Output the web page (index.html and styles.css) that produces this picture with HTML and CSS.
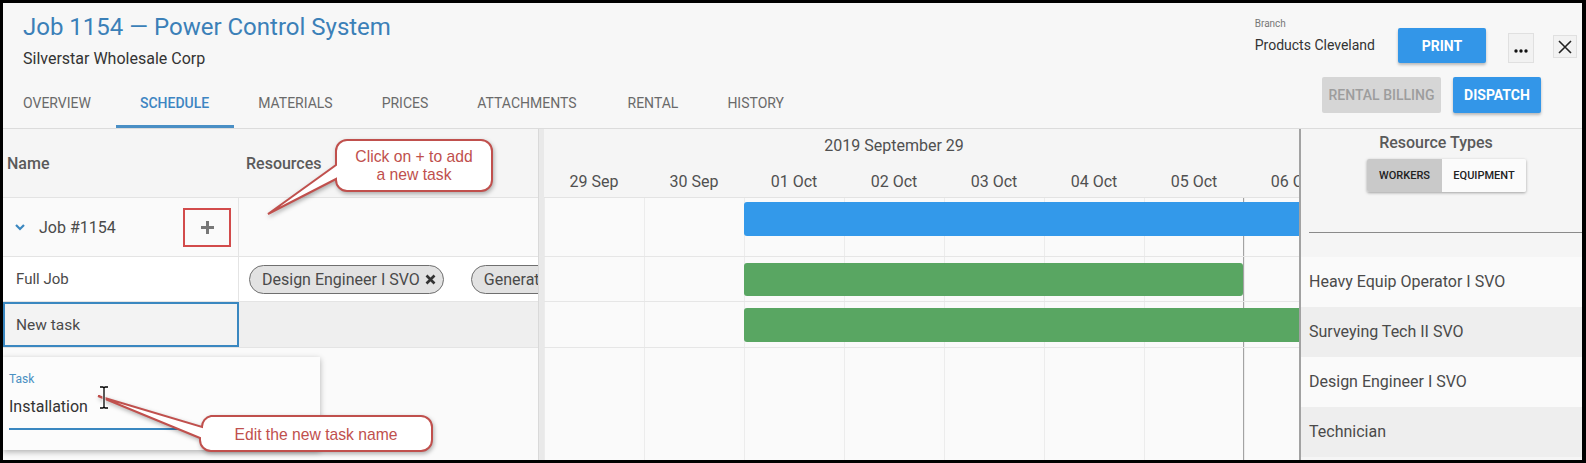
FILE: index.html
```html
<!DOCTYPE html>
<html lang="en">
<head>
<meta charset="utf-8">
<title>Job 1154 — Power Control System</title>
<link rel="stylesheet" href="styles.css">
</head>
<body>
<div class="app">
  <header class="top">
    <div class="top-left">
      <h1 class="title">Job 1154 — Power Control System</h1>
      <div class="subtitle">Silverstar Wholesale Corp</div>
      <nav class="tabs">
        <a class="tab">OVERVIEW</a>
        <a class="tab active">SCHEDULE</a>
        <a class="tab">MATERIALS</a>
        <a class="tab">PRICES</a>
        <a class="tab tab-wide">ATTACHMENTS</a>
        <a class="tab">RENTAL</a>
        <a class="tab">HISTORY</a>
      </nav>
    </div>
    <div class="top-right">
      <div class="row1">
        <div class="branch">
          <div class="branch-label">Branch</div>
          <div class="branch-value">Products Cleveland</div>
        </div>
        <button class="btn btn-primary btn-print">PRINT</button>
        <button class="icon-btn more"><svg width="16" height="6" viewBox="0 0 16 6"><circle cx="3" cy="3" r="1.7" fill="#111"/><circle cx="8" cy="3" r="1.7" fill="#111"/><circle cx="13" cy="3" r="1.7" fill="#111"/></svg></button>
        <button class="icon-btn close"><svg width="14" height="14" viewBox="0 0 14 14"><path d="M1 1L13 13M13 1L1 13" stroke="#222" stroke-width="1.6"/></svg></button>
      </div>
      <div class="row2">
        <button class="btn btn-rental">RENTAL BILLING</button>
        <button class="btn btn-primary btn-dispatch">DISPATCH</button>
      </div>
    </div>
  </header>

  <main class="main">
    <section class="grid">
      <div class="grid-head">
        <div class="c-name">Name</div>
        <div class="c-res">Resources</div>
      </div>
      <div class="g-row row-job">
        <div class="cell-name">
          <svg class="chev" width="10" height="7" viewBox="0 0 10 7"><path d="M1 1L5 5L9 1" stroke="#3a87c0" stroke-width="2.2" fill="none"/></svg>
          <span class="job-label">Job #1154</span>
          <button class="add-btn"><svg width="13" height="13" viewBox="0 0 13 13"><path d="M6.5 0V13M0 6.5H13" stroke="#777" stroke-width="3"/></svg></button>
        </div>
        <div class="cell-res"></div>
      </div>
      <div class="g-row row-full">
        <div class="cell-name">Full Job</div>
        <div class="cell-res">
          <span class="chip">Design Engineer I SVO <svg width="11" height="11" viewBox="0 0 11 11"><path d="M1.5 1.5L9.5 9.5M9.5 1.5L1.5 9.5" stroke="#333" stroke-width="2.6"/></svg></span>
          <span class="chip">Generator Technician <svg width="11" height="11" viewBox="0 0 11 11"><path d="M1.5 1.5L9.5 9.5M9.5 1.5L1.5 9.5" stroke="#333" stroke-width="2.6"/></svg></span>
        </div>
      </div>
      <div class="g-row row-new">
        <div class="cell-name">New task</div>
        <div class="cell-res"></div>
      </div>
      <div class="grid-rest"></div>
    </section>

    <div class="splitter"></div>

    <section class="gantt">
      <div class="gantt-head">
        <div class="month">2019 September 29</div>
        <div class="days">
          <div class="day">29 Sep</div>
          <div class="day">30 Sep</div>
          <div class="day">01 Oct</div>
          <div class="day">02 Oct</div>
          <div class="day">03 Oct</div>
          <div class="day">04 Oct</div>
          <div class="day">05 Oct</div>
          <div class="day">06 Oct</div>
        </div>
      </div>
      <div class="gantt-body">
        <div class="today"></div>
        <div class="gt-row gt-job"><div class="bar bar-blue" style="margin-left:200px;width:700px"></div></div>
        <div class="gt-row gt-full"><div class="bar bar-green" style="margin-left:200px;width:499px"></div></div>
        <div class="gt-row gt-new"><div class="bar bar-green" style="margin-left:200px;width:700px"></div></div>
      </div>
    </section>

    <aside class="res-panel">
      <div class="res-title">Resource Types</div>
      <div class="toggle-wrap">
        <div class="toggle">
          <span class="t-workers">WORKERS</span>
          <span class="t-equip">EQUIPMENT</span>
        </div>
      </div>
      <div class="res-divider"></div>
      <div class="res-list">
        <div class="res-item">Heavy Equip Operator I SVO</div>
        <div class="res-item alt">Surveying Tech II SVO</div>
        <div class="res-item">Design Engineer I SVO</div>
        <div class="res-item alt">Technician</div>
      </div>
    </aside>
  </main>

  <div class="editor">
    <div class="editor-label">Task</div>
    <div class="editor-input">Installation</div>
  </div>

  <svg class="annot" width="1579" height="457" viewBox="0 0 1579 457">
    <path class="bubble" d="M344 137H478A11 11 0 0 1 489 148V177A11 11 0 0 1 478 188H344A11 11 0 0 1 333 177V176L265 211L333 162V148A11 11 0 0 1 344 137Z"/>
    <path class="bubble" d="M208 413H418A11 11 0 0 1 429 424V437A11 11 0 0 1 418 448H208A11 11 0 0 1 197 437V435L95 393L199 424A11 11 0 0 1 208 413Z"/>
    <path d="M97 384h3l1 1l1-1h3M101 385V404M97 405h3l1-1l1 1h3" stroke="#fff" stroke-width="3" fill="none"/>
    <path d="M97 384h3l1 1l1-1h3M101 385V404M97 405h3l1-1l1 1h3" stroke="#000" stroke-width="1.3" fill="none"/>
  </svg>

  <div class="callout-text ct-add">Click on + to add<br>a new task</div>
  <div class="callout-text ct-edit">Edit the new task name</div>
</div>
</body>
</html>
```

FILE: styles.css
```css
* { box-sizing: border-box; }

html, body { margin: 0; padding: 0; }

body {
  background: #000;
  width: 1586px;
  height: 463px;
  overflow: hidden;
  font-family: Roboto, "Liberation Sans", Arial, sans-serif;
}

.app {
  position: relative;
  margin: 3px 4px 3px 3px;
  width: 1579px;
  height: 457px;
  background: #f7f7f7;
  overflow: hidden;
  display: flex;
  flex-direction: column;
}

/* ---------- header ---------- */
.top {
  height: 126px;
  flex: none;
  border-bottom: 1px solid #dcdcdc;
  display: flex;
}

.top-left {
  padding: 10px 0 0 20px;
  display: flex;
  flex-direction: column;
}

.title {
  margin: 0;
  font-size: 24px;
  line-height: 28px;
  font-weight: 400;
  color: #3b80b8;
  white-space: nowrap;
}

.subtitle {
  margin-top: 8px;
  font-size: 16px;
  line-height: 20px;
  color: #333;
}

.tabs {
  margin-top: auto;
  margin-left: -24px;
  display: flex;
  height: 47px;
}

.tab {
  height: 47px;
  padding: 0 25px 0 24px;
  line-height: 44px;
  font-size: 14px;
  color: #6a6a6a;
  white-space: nowrap;
}

.tab-wide { padding-right: 27px; }

.tab.active {
  color: #3d85c2;
  font-weight: 500;
  box-shadow: inset 0 -3px 0 #4a8fc5;
}

.top-right {
  margin-left: auto;
  padding: 15px 5px 0 0;
  display: flex;
  flex-direction: column;
  align-items: flex-end;
}

.row1 {
  display: flex;
  align-items: flex-start;
}

.branch { margin-right: 23px; }

.branch-label {
  font-size: 10px;
  line-height: 12px;
  color: #777;
}

.branch-value {
  margin-top: 5px;
  font-size: 14px;
  line-height: 20px;
  color: #333;
  white-space: nowrap;
}

.btn {
  border: 0;
  border-radius: 2px;
  padding: 0;
  font-family: inherit;
  font-size: 14px;
  cursor: pointer;
}

.btn-primary {
  background: #3396e8;
  color: #fff;
  font-weight: 700;
  box-shadow: 0 2px 3px rgba(0, 0, 0, 0.25);
}

.btn-print {
  margin-top: 10px;
  margin-right: 22px;
  width: 88px;
  height: 35px;
}

.icon-btn {
  border: 1px solid #e0e0e0;
  background: #f2f2f2;
  padding: 0;
  display: flex;
  align-items: center;
  justify-content: center;
}

.icon-btn.more {
  margin-top: 15px;
  margin-right: 19px;
  width: 26px;
  height: 30px;
  padding-top: 6px;
}

.icon-btn.close {
  margin-top: 17px;
  width: 24px;
  height: 23px;
}

.row2 {
  display: flex;
  gap: 12px;
  margin-top: 14px;
  margin-right: 36px;
}

.btn-rental {
  width: 119px;
  height: 36px;
  background: #d6d6d6;
  color: #9d9d9d;
  font-weight: 500;
}

.btn-dispatch {
  width: 88px;
  height: 36px;
}

/* ---------- main ---------- */
.main {
  flex: 1;
  min-height: 0;
  display: flex;
}

.grid {
  width: 535px;
  flex: none;
  display: flex;
  flex-direction: column;
  background: #fafafa;
}

.grid-head {
  height: 69px;
  flex: none;
  display: grid;
  grid-template-columns: 236px 1fr;
  align-items: center;
  background: #f5f5f5;
  border-bottom: 1px solid #e3e3e3;
  font-size: 16px;
  font-weight: 500;
  color: #5a5a5a;
}

.grid-head .c-name { padding-left: 4px; }
.grid-head .c-res { padding-left: 7px; }

.g-row {
  flex: none;
  display: grid;
  grid-template-columns: 236px 1fr;
  border-bottom: 1px solid #e4e4e4;
}

.cell-name {
  display: flex;
  align-items: center;
  border-right: 1px solid #e4e4e4;
  font-size: 15px;
  color: #4a4a4a;
}

.cell-res {
  display: flex;
  align-items: center;
  gap: 27px;
  padding-left: 10px;
  overflow: hidden;
  white-space: nowrap;
}

.row-job { height: 59px; background: #fafafa; }
.row-job .cell-name { padding-left: 12px; }

.chev { margin-right: 14px; flex: none; }

.job-label { font-size: 16px; color: #4a4a4a; }

.add-btn {
  margin-left: auto;
  margin-right: 7px;
  width: 48px;
  height: 39px;
  border: 2px solid #d24b4b;
  background: transparent;
  display: flex;
  align-items: center;
  justify-content: center;
  padding: 0;
}

.row-full { height: 45px; background: #fff; }
.row-full .cell-name { padding-left: 13px; }

.chip {
  flex: none;
  height: 29px;
  display: flex;
  align-items: center;
  gap: 5px;
  padding: 0 7px 0 12px;
  border: 1px solid #6f6f6f;
  border-radius: 15px;
  background: #e2e2e2;
  font-size: 16px;
  color: #4a4a4a;
}

.row-new { height: 46px; background: #efefef; }
.row-new .cell-name {
  border: 2px solid #3a87c0;
  background: #f3f3f3;
  padding-left: 11px;
  font-size: 15.5px;
}

.grid-rest { flex: 1; }

.splitter {
  width: 6px;
  flex: none;
  background: #e9e9e9;
  border-left: 1px solid #d9d9d9;
}

/* ---------- gantt ---------- */
.gantt {
  width: 755px;
  flex: none;
  display: flex;
  flex-direction: column;
  overflow: hidden;
}

.gantt-head {
  height: 69px;
  flex: none;
  background: #f5f5f5;
  border-bottom: 1px solid #e3e3e3;
  font-size: 16px;
  font-weight: 400;
  color: #505050;
}

.month {
  width: 700px;
  height: 34px;
  line-height: 34px;
  text-align: center;
}

.days {
  display: flex;
  height: 34px;
  padding-top: 2px;
}

.day {
  width: 100px;
  flex: none;
  text-align: center;
  line-height: 34px;
  white-space: nowrap;
}

.gantt-body {
  flex: 1;
  position: relative;
  background-color: #fafafa;
  background-image: repeating-linear-gradient(to right, #ececec 0 1px, transparent 1px 100px);
}

.today {
  position: absolute;
  left: 699px;
  top: 0;
  bottom: 0;
  width: 1px;
  background: #a3a3a3;
}

.gt-row {
  position: relative;
  border-bottom: 1px solid #e6e6e6;
}

.gt-job { height: 59px; padding-top: 4px; }
.gt-full { height: 45px; padding-top: 6px; }
.gt-new { height: 46px; padding-top: 6px; }

.bar { height: 34px; border-radius: 3px; }
.gt-full .bar { height: 33px; }
.bar-blue { background: #3399ea; }
.bar-green { background: #59a662; }

/* ---------- resource panel ---------- */
.res-panel {
  flex: 1;
  display: flex;
  flex-direction: column;
  border-left: 2px solid #a2a2a2;
  background: #f5f5f5;
}

.res-title {
  padding: 4px 11px 0 0;
  text-align: center;
  font-size: 16px;
  line-height: 20px;
  font-weight: 500;
  color: #5a5a5a;
}

.toggle-wrap {
  display: flex;
  justify-content: center;
  padding-left: 10px;
  margin-top: 6px;
}

.toggle {
  display: flex;
  height: 33px;
  border-radius: 2px;
  overflow: hidden;
  box-shadow: 0 1px 3px rgba(0, 0, 0, 0.35);
}

.toggle span {
  display: flex;
  align-items: center;
  justify-content: center;
  font-size: 11px;
  font-weight: 500;
  color: #222;
}

.t-workers { width: 75px; background: #c9c9c9; }
.t-equip { width: 84px; background: #fbfbfb; }

.res-divider {
  margin: 40px 0 0 8px;
  height: 1px;
  background: #8a8a8a;
}

.res-list { margin-top: 24px; }

.res-item {
  height: 50px;
  line-height: 50px;
  padding-left: 8px;
  font-size: 16px;
  color: #4a4a4a;
  background: #fafafa;
  white-space: nowrap;
}

.res-item.alt { background: #eeeeee; }

/* ---------- popup editor ---------- */
.editor {
  position: absolute;
  left: 0;
  top: 354px;
  width: 317px;
  height: 93px;
  padding: 15px 5px 0 6px;
  background: #fcfcfc;
  box-shadow: 0 2px 6px rgba(0, 0, 0, 0.3);
}

.editor-label {
  font-size: 12px;
  line-height: 14px;
  color: #4a90c2;
}

.editor-input {
  margin-top: 11px;
  padding-bottom: 11px;
  font-size: 16px;
  line-height: 20px;
  color: #333;
  border-bottom: 2px solid #3a87c0;
}

/* ---------- annotations ---------- */
.annot {
  position: absolute;
  left: 0;
  top: 0;
  pointer-events: none;
}

.bubble {
  fill: #fff;
  stroke: #c0504d;
  stroke-width: 2;
  filter: drop-shadow(1px 2px 2px rgba(0, 0, 0, 0.3));
}

.callout-text {
  position: absolute;
  display: flex;
  align-items: center;
  justify-content: center;
  text-align: center;
  color: #c0504d;
  font-family: "Liberation Sans", Arial, sans-serif;
  font-size: 15.7px;
  line-height: 18px;
  pointer-events: none;
}

.ct-add { left: 333px; top: 137px; width: 156px; height: 51px; }
.ct-edit { left: 197px; top: 413px; width: 232px; height: 35px; padding-top: 3px; }
```
